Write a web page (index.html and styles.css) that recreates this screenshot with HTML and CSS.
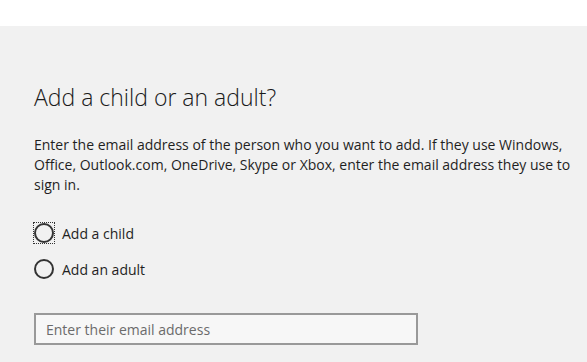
FILE: index.html
```html
<!DOCTYPE html>
<html>
<head>
<meta charset="utf-8">
<link rel="stylesheet" href="styles.css">
</head>
<body>
<div class="topbar"></div>
<main class="panel">
  <h1 class="title">Add a child or an adult?</h1>
  <p class="desc">Enter the email address of the person who you want to add. If they use Windows, Office, Outlook.com, OneDrive, Skype or Xbox, enter the email address they use to sign in.</p>
  <div class="options">
    <label class="option focused"><span class="radio-wrap"><span class="radio"></span></span><span class="opt-text">Add a child</span></label>
    <label class="option"><span class="radio-wrap"><span class="radio"></span></span><span class="opt-text">Add an adult</span></label>
  </div>
  <div class="field"><span class="placeholder">Enter their email address</span></div>
</main>
</body>
</html>
```
FILE: styles.css
```css
html, body {
  margin: 0;
  padding: 0;
  height: 100%;
}
body {
  background: #f1f1f1;
  font-family: "Open Sans", sans-serif;
  color: #1f1f1f;
  overflow: hidden;
}
.topbar {
  height: 26px;
  background: #ffffff;
}
.panel {
  padding: 0 0 0 34px;
}
.title {
  margin: 55px 0 0 0;
  font-weight: 300;
  font-size: 23px;
  line-height: 32px;
  color: #1a1a1a;
}
.desc {
  margin: 22px 0 0 0;
  font-size: 14px;
  line-height: 20px;
  width: 545px;
  color: #1f1f1f;
}
.options {
  margin-top: 28px;
  display: flex;
  flex-direction: column;
  gap: 16px;
}
.option {
  display: flex;
  align-items: center;
  gap: 8px;
  height: 20px;
  font-size: 14px;
}
.radio-wrap {
  width: 20px;
  height: 20px;
  display: flex;
  align-items: center;
  justify-content: center;
  box-sizing: border-box;
}
.focused .radio-wrap {
  outline: 1px dotted #333;
}
.radio {
  width: 20px;
  height: 20px;
  box-sizing: border-box;
  border: 2px solid #333;
  border-radius: 50%;
}
.field {
  margin-top: 34px;
  width: 384px;
  height: 32px;
  box-sizing: border-box;
  border: 2px solid #999;
  background: #f7f7f7;
  display: flex;
  align-items: center;
  padding-left: 10px;
}
.placeholder {
  font-size: 14px;
  color: #6b6b6b;
}
```
